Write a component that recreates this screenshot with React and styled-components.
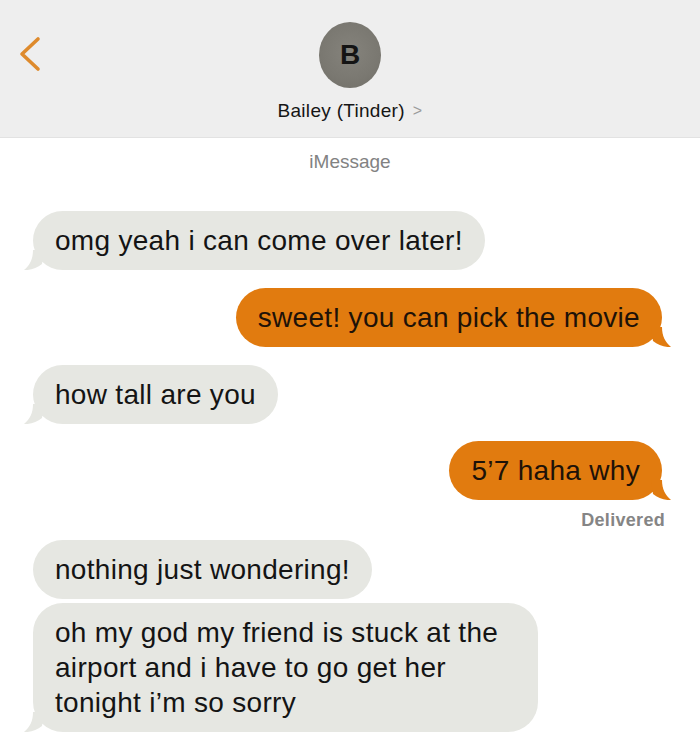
import React from "react";
import styled, { createGlobalStyle } from "styled-components";

const Global = createGlobalStyle`
  html, body { margin: 0; padding: 0; background: #ffffff; }
  body { font-family: "Liberation Sans", Arial, sans-serif; }
`;

const Page = styled.div`
  width: 700px;
  height: 755px;
  overflow: hidden;
  background: #fff;
  display: flex;
  flex-direction: column;
`;

const Header = styled.header`
  height: 138px;
  box-sizing: border-box;
  background: #eeeeee;
  border-bottom: 1px solid #e2e2e2;
  display: grid;
  grid-template-columns: 80px 1fr 80px;
  padding-top: 22px;
`;

const Back = styled.div`
  padding: 14px 0 0 16px;
`;

const Contact = styled.div`
  display: flex;
  flex-direction: column;
  align-items: center;
`;

const Avatar = styled.div`
  width: 62px;
  height: 66px;
  border-radius: 50%;
  background: radial-gradient(circle at 50% 45%, #85837c 0%, #7a7871 60%, #6f6d66 100%);
  display: flex;
  align-items: center;
  justify-content: center;
  font-size: 28px;
  font-weight: 700;
  color: #141414;
`;

const Name = styled.div`
  margin-top: 12px;
  font-size: 19px;
  letter-spacing: 0.3px;
  line-height: 22px;
  color: #151515;
  display: flex;
  align-items: center;
  gap: 8px;
`;

const Chev = styled.span`
  color: #9a9a9a;
  font-size: 16px;
`;

const ServiceLabel = styled.div`
  margin-top: 13px;
  text-align: center;
  font-size: 19px;
  line-height: 22px;
  color: #828282;
`;

const Thread = styled.div`
  margin-top: 38px;
  padding: 0 38px 0 33px;
  display: flex;
  flex-direction: column;
`;

const Bubble = styled.div`
  position: relative;
  align-self: ${(p) => (p.$me ? "flex-end" : "flex-start")};
  background: ${(p) => (p.$me ? "#e17b0f" : "#e6e7e2")};
  color: ${(p) => (p.$me ? "#1e1208" : "#141414")};
  font-size: 28px;
  letter-spacing: 0.3px;
  line-height: 35px;
  padding: 12px 22px;
  border-radius: 30px;
  max-width: 461px;
  margin-top: ${(p) => p.$gap}px;
`;

const Tail = styled.svg`
  position: absolute;
  bottom: 0;
  width: 22px;
  height: 20px;
  ${(p) => (p.$me ? "right: -9px; transform: scaleX(-1);" : "left: -9px;")}
`;

const Status = styled.div`
  align-self: flex-end;
  margin-top: 10px;
  margin-right: -3px;
  font-size: 18px;
  letter-spacing: 0.3px;
  line-height: 20px;
  color: #858585;
  font-weight: 700;
`;

function Msg({ me, tail, gap, children }) {
  return (
    <Bubble $me={me} $gap={gap}>
      {children}
      {tail && (
        <Tail $me={me} viewBox="0 0 22 20">
          <path
            d="M20 0 L9 0 C9 9 6 15 0 20 C7 20.5 13 18 18 14 Z"
            fill={me ? "#e17b0f" : "#e6e7e2"}
          />
        </Tail>
      )}
    </Bubble>
  );
}

export default function App() {
  return (
    <Page>
      <Global />
      <Header>
        <Back>
          <svg width="30" height="36" viewBox="0 0 30 36">
            <path
              d="M22 3 L6 18 L22 33"
              fill="none"
              stroke="#de8a2c"
              strokeWidth="3.6"
              strokeLinecap="round"
              strokeLinejoin="round"
            />
          </svg>
        </Back>
        <Contact>
          <Avatar>B</Avatar>
          <Name>
            Bailey (Tinder)
            <Chev>&gt;</Chev>
          </Name>
        </Contact>
        <div />
      </Header>
      <ServiceLabel>iMessage</ServiceLabel>
      <Thread>
        <Msg tail gap={0}>omg yeah i can come over later!</Msg>
        <Msg me tail gap={18}>sweet! you can pick the movie</Msg>
        <Msg tail gap={18}>how tall are you</Msg>
        <Msg me tail gap={17}>5’7 haha why</Msg>
        <Status>Delivered</Status>
        <Msg gap={10}>nothing just wondering!</Msg>
        <Msg tail gap={4}>
          oh my god my friend is stuck at the airport and i have to go get her tonight i’m so sorry
        </Msg>
      </Thread>
    </Page>
  );
}
